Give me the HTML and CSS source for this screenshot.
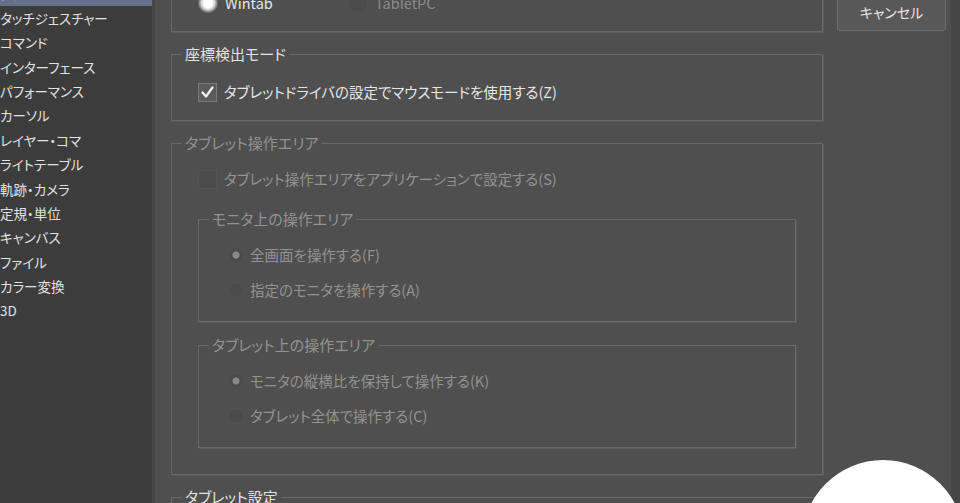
FILE: index.html
```html
<!DOCTYPE html>
<html lang="ja">
<head>
    <meta charset="UTF-8">
    <title>環境設定 - タブレット</title>
    <link rel="stylesheet" href="styles.css">
</head>
<body>
    <div class="window">
        <nav class="sidebar">
            <ul class="nav-list">
                <li class="nav-item selected">タブレット</li>
                <li class="nav-item">タッチジェスチャー</li>
                <li class="nav-item">コマンド</li>
                <li class="nav-item">インターフェース</li>
                <li class="nav-item">パフォーマンス</li>
                <li class="nav-item">カーソル</li>
                <li class="nav-item">レイヤー・コマ</li>
                <li class="nav-item">ライトテーブル</li>
                <li class="nav-item">軌跡・カメラ</li>
                <li class="nav-item">定規・単位</li>
                <li class="nav-item">キャンバス</li>
                <li class="nav-item">ファイル</li>
                <li class="nav-item">カラー変換</li>
                <li class="nav-item">3D</li>
            </ul>
        </nav>

        <div class="main">
            <div class="settings">
                <fieldset class="group">
                    <legend>使用するタブレットサービス</legend>
                    <div class="option-row">
                        <label class="option wide"><span class="radio checked"></span>Wintab</label>
                        <label class="option disabled"><span class="radio"></span>TabletPC</label>
                    </div>
                </fieldset>

                <fieldset class="group">
                    <legend>座標検出モード</legend>
                    <label class="option"><span class="checkbox checked">
                        <svg width="19" height="19" viewBox="0 0 19 19"><polyline points="4.5,9.5 8,13.5 14.5,4.5" fill="none" stroke="#f2f2f2" stroke-width="2.2" stroke-linecap="round" stroke-linejoin="round"/></svg>
                    </span>タブレットドライバの設定でマウスモードを使用する(Z)</label>
                </fieldset>

                <fieldset class="group disabled">
                    <legend>タブレット操作エリア</legend>
                    <label class="option"><span class="checkbox"></span>タブレット操作エリアをアプリケーションで設定する(S)</label>

                    <fieldset class="group inner">
                        <legend>モニタ上の操作エリア</legend>
                        <label class="option"><span class="radio dot"></span>全画面を操作する(F)</label>
                        <label class="option"><span class="radio"></span>指定のモニタを操作する(A)</label>
                    </fieldset>

                    <fieldset class="group inner">
                        <legend>タブレット上の操作エリア</legend>
                        <label class="option"><span class="radio dot"></span>モニタの縦横比を保持して操作する(K)</label>
                        <label class="option"><span class="radio"></span>タブレット全体で操作する(C)</label>
                    </fieldset>
                </fieldset>

                <fieldset class="group">
                    <legend>タブレット設定</legend>
                    <div class="option-row"></div>
                </fieldset>
            </div>

            <div class="buttons">
                <button class="btn">キャンセル</button>
            </div>
        </div>

        <div class="edge"></div>
        <div class="pointer"></div>
    </div>
</body>
</html>
```

FILE: styles.css
```css
body {
    margin: 0;
    padding: 0;
    font-family: "Noto Sans CJK JP", "Noto Sans", sans-serif;
    font-size: 14px;
    font-feature-settings: "palt";
    color: #e6e6e6;
    background: #4f4f4f;
    overflow: hidden;
}

.window {
    position: relative;
    display: flex;
    width: 960px;
    height: 503px;
    overflow: hidden;
}

/* left category list */
.sidebar {
    width: 152px;
    flex-shrink: 0;
    background: #3c3c3c;
    border-right: 3px solid #464646;
}

.nav-list {
    list-style: none;
    margin: -18.6px 0 0;
    padding: 0;
}

.nav-item {
    height: 24.4px;
    line-height: 24.4px;
    padding-left: 0;
    font-size: 13.5px;
    color: #e2e2e2;
    white-space: nowrap;
}

.nav-item.selected {
    background: #63708a;
    color: #ffffff;
}

.main {
    display: flex;
    flex: 1;
}

.settings {
    width: 652px;
    margin: -43px 0 0 16px;
}

/* group boxes */
.group {
    margin: 0 0 14px;
    padding: 20px 26px 18px;
    border: 1px solid #6a6a6a;
    box-shadow: 1px 1px 0 #5a5a5a;
    min-width: 0;
}

.group legend {
    margin-left: -16px;
    padding: 0 3px;
    font-size: 15px;
    line-height: 16px;
    color: #e2e2e2;
}

.group.disabled {
    padding: 18px 26px 26px;
}

.group.disabled legend,
.group.disabled .option {
    color: #939393;
}

.group.inner {
    margin: 22px 0 0;
    padding: 18px 29px 21px;
}

.group.inner + .group.inner {
    margin-top: 15px;
}

.group.inner legend {
    margin-left: -19px;
}

.option-row {
    display: flex;
    height: 20px;
}

.option {
    display: flex;
    align-items: center;
    height: 20px;
    line-height: 20px;
    font-size: 14.5px;
    white-space: nowrap;
}

.option.wide {
    width: 150px;
}

.option.disabled {
    color: #8c8c8c;
}

.inner .option + .option {
    margin-top: 15px;
}

/* radio buttons */
.radio {
    box-sizing: border-box;
    width: 20px;
    height: 20px;
    margin-right: 7px;
    border-radius: 50%;
    background: #4b4b4b;
    border: 1px solid #535353;
    flex-shrink: 0;
}

.radio.checked {
    background: radial-gradient(circle, #ffffff 0 5px, #d6d6d6 6px 7px, #9a9a9a 8px);
    border: 1px solid #6e6e6e;
}

.inner .radio {
    width: 16px;
    height: 16px;
    margin-right: 6px;
}

.radio.dot {
    background: radial-gradient(circle, #8a8a8a 0 3px, #4b4b4b 4px);
}

/* checkboxes */
.checkbox {
    box-sizing: border-box;
    width: 19px;
    height: 19px;
    margin-right: 7px;
    background: #4b4b4b;
    border: 1px solid #545454;
    flex-shrink: 0;
}

.checkbox.checked {
    background: #5c5c5c;
    border: 1px solid #7a7a7a;
}

.checkbox svg {
    display: block;
    margin: -1px;
}

/* dialog buttons */
.buttons {
    margin-left: 14px;
}

.btn {
    width: 109px;
    height: 35px;
    margin-top: -4px;
    padding: 0 0 3px;
    font-family: inherit;
    font-size: 14px;
    font-feature-settings: "palt";
    color: #e6e6e6;
    background: #585858;
    border: 1px solid #6c6c6c;
    border-radius: 3px;
}

.edge {
    width: 9px;
    margin-left: 5px;
    background: #454545;
    flex-shrink: 0;
}

/* white pointer blob overlapping the corner */
.pointer {
    position: absolute;
    left: 802px;
    top: 460px;
    width: 162px;
    height: 162px;
    border-radius: 50%;
    background: #ffffff;
}
```
